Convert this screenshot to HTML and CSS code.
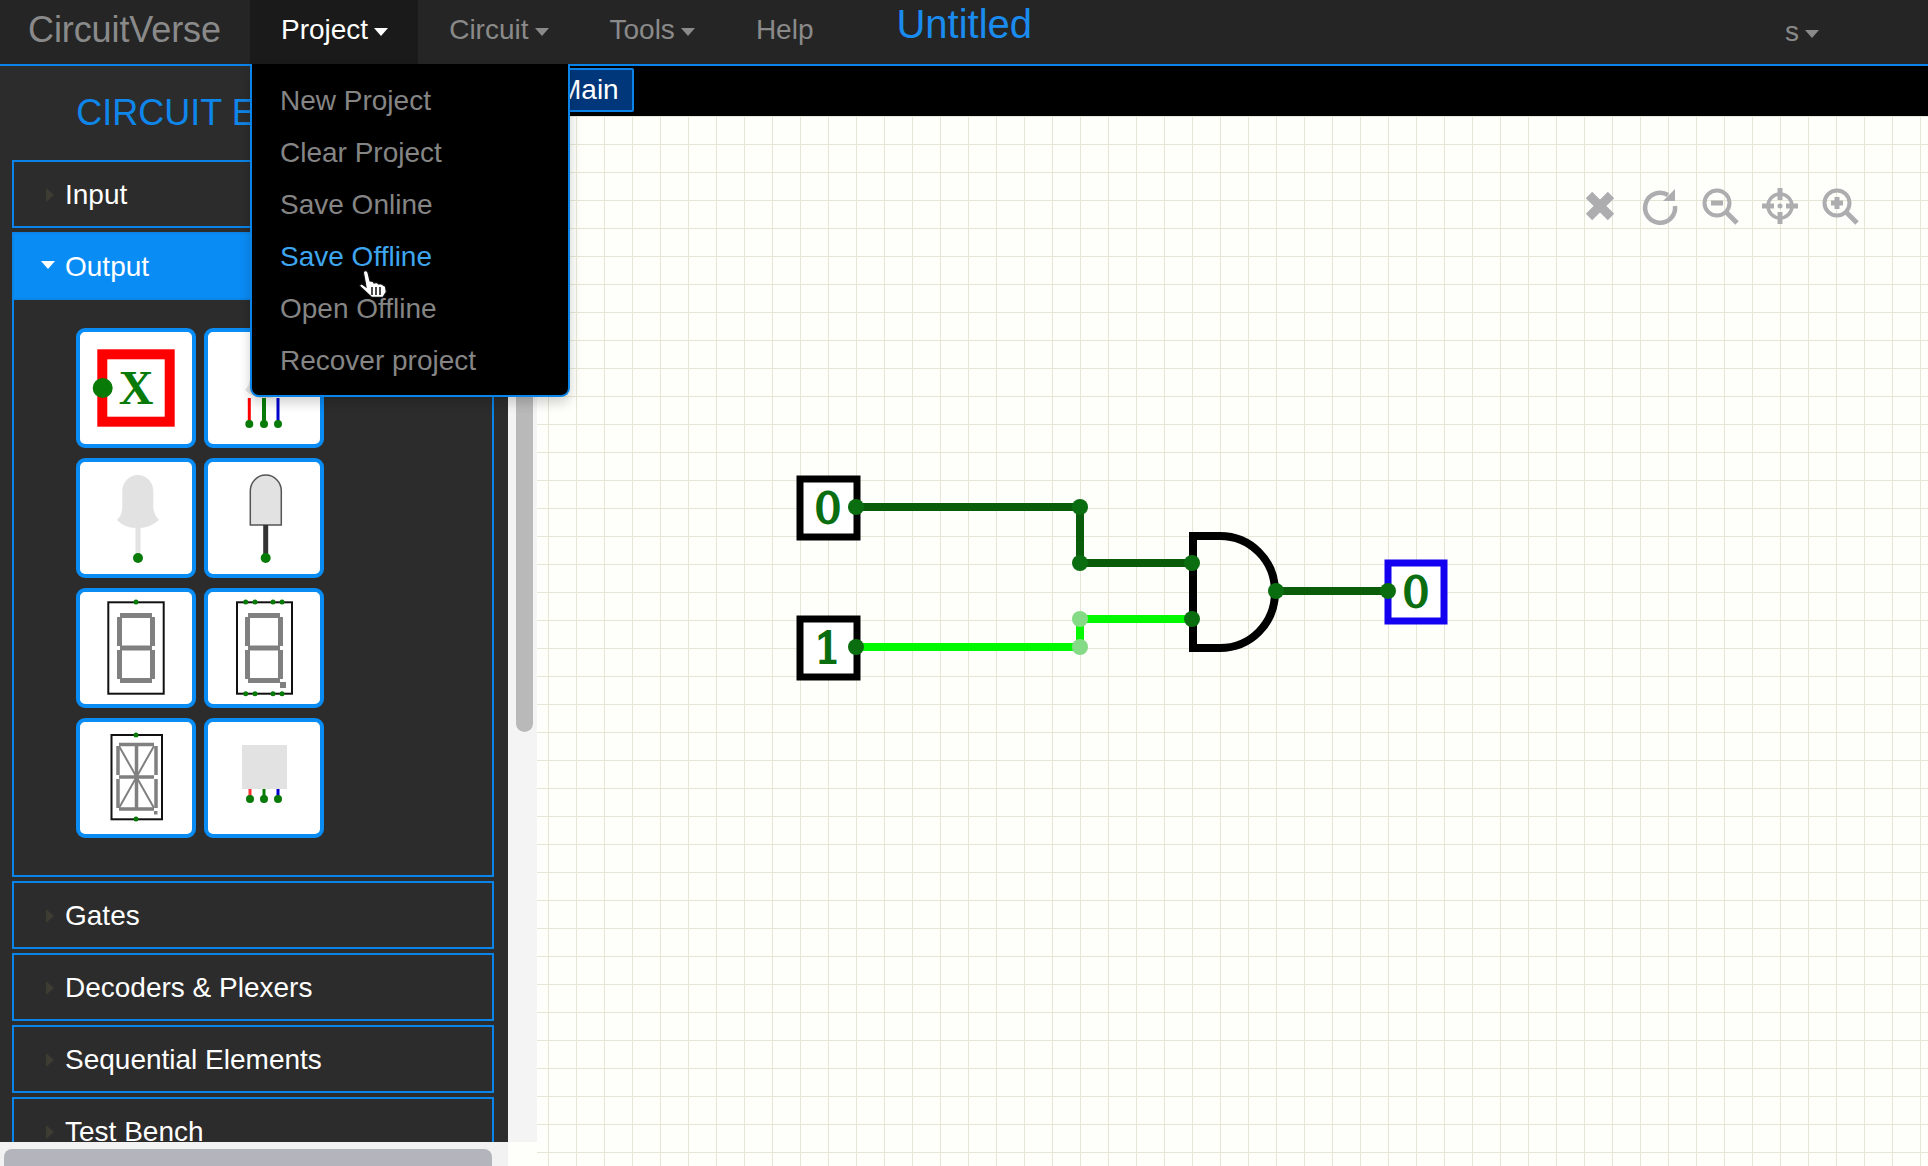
FILE: index.html
```html
<!DOCTYPE html>
<html lang="en">
<head>
<meta charset="utf-8">
<title>CircuitVerse</title>
<link rel="stylesheet" href="styles.css">
</head>
<body>
<nav class="navbar">
  <span class="brand">CircuitVerse</span>
  <div class="nav-item active">Project<i class="caret"></i>
    <div class="menu">
      <div class="menu-item">New Project</div>
      <div class="menu-item">Clear Project</div>
      <div class="menu-item">Save Online</div>
      <div class="menu-item hover">Save Offline</div>
      <div class="menu-item">Open Offline</div>
      <div class="menu-item">Recover project</div>
      <svg class="hand" viewBox="0 0 28 28">
        <path d="M6 .7C7.500.2 8.500 1 9 2.500L11 11L14 11.500L15 13L18 12.500L19.500 14L22.500 14L26.500 16.500L27.300 22L24 27.300H12.500L1 16.500C.3 15 1.700 13.500 3.300 14.300L7 17L4.500 3C4.300 2 5 1 6 .7Z" fill="#fff" stroke="#111" stroke-width="1.200"/>
        <path d="M13 17V25M17 17V25M21 17V25" stroke="#111" stroke-width="1.500" fill="none"/>
      </svg>
    </div>
  </div>
  <div class="nav-item">Circuit<i class="caret"></i></div>
  <div class="nav-item">Tools<i class="caret"></i></div>
  <div class="nav-item">Help</div>
  <span class="project-name">Untitled</span>
  <div class="user">s<i class="caret"></i></div>
</nav>

<main class="workspace">
  <div class="left-col">
    <div class="left-top">
      <aside class="sidebar">
        <h2 class="side-title">CIRCUIT ELEMENTS</h2>
        <div class="acc-row"><i class="arrow"></i>Input</div>
        <div class="acc-row open"><i class="arrow-down"></i>Output</div>
        <div class="panel">
          <div class="tile"><svg viewBox="4 4 112 112"><rect x="26.300" y="26.300" width="67.400" height="67.400" fill="#fff" stroke="#f00" stroke-width="10"/><circle cx="26.700" cy="60" r="10" fill="#087a08"/><text x="60" y="76" class="x-label">X</text></svg></div>
          <div class="tile"><svg viewBox="4 4 112 112"><path d="M46 33a15.500 16 0 0 1 31 0V50Q78 57 83 62Q72 71 62 70Q50 71 41 62Q46 57 46 50Z" fill="#e2e2e2"/><path d="M45.300 70V94" stroke="#f00" stroke-width="3"/><path d="M60 70V94" stroke="#087a08" stroke-width="4"/><path d="M74 70V94" stroke="#00c" stroke-width="3"/><g fill="#087a08"><circle cx="45.300" cy="96" r="4"/><circle cx="60" cy="96" r="4"/><circle cx="74" cy="96" r="4"/></g></svg></div>
          <div class="tile"><svg viewBox="4 4 112 112"><path d="M46.300 33a15.500 16 0 0 1 31 0V50Q78 57 83 62Q72 71 62 70Q50 71 41 62Q46 57 46.300 50Z" fill="#e2e2e2"/><path d="M62 70V96" stroke="#e2e2e2" stroke-width="5"/><circle cx="62" cy="100" r="5" fill="#087a08"/></svg></div>
          <div class="tile"><svg viewBox="4 4 112 112"><path d="M46.300 67V33a15.500 16 0 0 1 31 0V67Z" fill="#e2e2e2" stroke="#555" stroke-width="1.500"/><path d="M61.700 67V96" stroke="#333" stroke-width="5"/><circle cx="61.700" cy="100" r="5" fill="#087a08"/></svg></div>
          <div class="tile"><svg viewBox="4 4 112 112"><rect x="32.300" y="14.300" width="55.400" height="91.400" fill="#fff" stroke="#111" stroke-width="2"/><path d="M44 27.500H76M44 60H76M44 92.500H76M43.500 29V58M76.500 29V58M43.500 62V91M76.500 62V91" stroke="#808080" stroke-width="5" fill="none"/><circle cx="60" cy="14" r="2.500" fill="#087a08"/></svg></div>
          <div class="tile"><svg viewBox="4 4 112 112"><rect x="33" y="14.300" width="55" height="91.400" fill="#fff" stroke="#111" stroke-width="2"/><path d="M44 27.500H76M44 60H76M44 92.500H76M43.500 29V58M76.500 29V58M43.500 62V91M76.500 62V91" stroke="#808080" stroke-width="5" fill="none"/><rect x="76" y="94" width="6" height="6" fill="#808080"/><g fill="#087a08"><circle cx="41.700" cy="14" r="2.500"/><circle cx="51" cy="14" r="2.500"/><circle cx="69" cy="14" r="2.500"/><circle cx="78" cy="14" r="2.500"/><circle cx="41.700" cy="105.700" r="2.500"/><circle cx="51" cy="105.700" r="2.500"/><circle cx="69" cy="105.700" r="2.500"/><circle cx="78" cy="105.700" r="2.500"/></g></svg></div>
          <div class="tile"><svg viewBox="4 4 112 112"><rect x="35.500" y="17" width="50.500" height="84.300" fill="#fff" stroke="#111" stroke-width="2"/><path d="M43 26.500H78M43 59H78M43 91H78M42 28V57M80 28V57M42 61V90M80 61V90M60.500 27V91" stroke="#808080" stroke-width="3.500" fill="none"/><path d="M43 28L60.500 59L78 28M43 90L60.500 59L78 90" stroke="#808080" stroke-width="2" fill="none"/><rect x="78" y="93" width="3.500" height="3.500" fill="#808080"/><circle cx="60" cy="17" r="2.500" fill="#087a08"/><circle cx="60" cy="101" r="2.500" fill="#087a08"/></svg></div>
          <div class="tile"><svg viewBox="4 4 112 112"><rect x="38" y="27" width="45" height="44" fill="#e2e2e2"/><path d="M46 71V80" stroke="#f33" stroke-width="3"/><path d="M60 71V80" stroke="#087a08" stroke-width="3"/><path d="M74 71V80" stroke="#00c" stroke-width="3"/><g fill="#087a08"><circle cx="46" cy="81" r="4"/><circle cx="60" cy="81" r="4"/><circle cx="74" cy="81" r="4"/></g></svg></div>
        </div>
        <div class="acc-row"><i class="arrow"></i>Gates</div>
        <div class="acc-row"><i class="arrow"></i>Decoders &amp; Plexers</div>
        <div class="acc-row"><i class="arrow"></i>Sequential Elements</div>
        <div class="acc-row"><i class="arrow"></i>Test Bench</div>
      </aside>
      <div class="vtrack"><div class="vthumb"></div></div>
    </div>
    <div class="htrack"><div class="hthumb"></div></div>
  </div>

  <section class="stage">
    <div class="tabbar"><div class="tab">Main</div></div>
    <div class="canvas">
      <svg class="circuit" viewBox="537 116 1391 1050" width="1391" height="1050">
        <rect x="800" y="479" width="57" height="58" fill="#fff" stroke="#000" stroke-width="7"/>
        <rect x="800" y="619" width="57" height="58" fill="#fff" stroke="#000" stroke-width="7"/>
        <rect x="1388" y="563" width="56" height="58" fill="#fff" stroke="#1400f0" stroke-width="7"/>
        <text x="828" y="523" class="digit">0</text>
        <text x="828" y="663" class="digit">1</text>
        <text x="1416" y="607" class="digit">0</text>
        <path d="M1220 536H1193V648H1220C1250 648 1275 624 1275 592C1275 560 1250 536 1220 536Z" fill="none" stroke="#000" stroke-width="8"/>
        <path d="M856 507H1080V563H1192M1276 591H1387" fill="none" stroke="#0a5c0a" stroke-width="8"/>
        <path d="M856 647H1080V619H1192" fill="none" stroke="#00f800" stroke-width="8"/>
        <g fill="#0a6e10">
          <circle cx="856" cy="507" r="8"/><circle cx="1080" cy="507" r="8"/><circle cx="1080" cy="563" r="8"/><circle cx="1192" cy="563" r="8"/>
          <circle cx="856" cy="647" r="8"/><circle cx="1192" cy="619" r="8"/><circle cx="1276" cy="591" r="8"/><circle cx="1388" cy="591" r="8"/>
        </g>
        <circle cx="1080" cy="619" r="8" fill="#85da85"/><circle cx="1080" cy="647" r="8" fill="#85da85"/>
      </svg>
      <div class="tools">
        <svg viewBox="0 0 40 40"><path d="M9 9L31 31M31 9L9 31" stroke-width="9"/></svg>
        <svg viewBox="0 0 40 40"><path d="M28 9A15 15 0 1 0 35 20" stroke-width="4.500"/><path class="solid" d="M35 3V15H23Z"/></svg>
        <svg viewBox="0 0 40 40"><circle cx="17" cy="17" r="12.500" stroke-width="4"/><path d="M26 26L37 37" stroke-width="5"/><path d="M11 17H23" stroke-width="5"/></svg>
        <svg viewBox="0 0 40 40"><circle cx="20" cy="20" r="12" stroke-width="3.500"/><path d="M20 2V14M20 26V38M2 20H14M26 20H38" stroke-width="5"/><circle class="solid" cx="20" cy="20" r="2.500"/></svg>
        <svg viewBox="0 0 40 40"><circle cx="17" cy="17" r="12.500" stroke-width="4"/><path d="M26 26L37 37" stroke-width="5"/><path d="M11 17H23M17 11V23" stroke-width="5"/></svg>
      </div>
    </div>
  </section>
</main>
</body>
</html>
```
FILE: styles.css
```css
* { box-sizing: border-box; }
html, body { margin: 0; height: 100%; overflow: hidden; }
body {
  font-family: "Liberation Sans", Arial, sans-serif;
  font-size: 28px;
  background: #fefefb;
  color: #fff;
}

/* top bar */
.navbar {
  position: relative;
  z-index: 5;
  display: flex;
  align-items: stretch;
  height: 66px;
  background: #252525;
  border-bottom: 2px solid #0a84e8;
  color: #8a8a8a;
}
.brand {
  display: flex;
  align-items: center;
  width: 250px;
  padding: 0 0 5px 28px;
  font-size: 36px;
  letter-spacing: -0.1px;
}
.nav-item {
  position: relative;
  display: flex;
  align-items: center;
  padding: 0 30px 4px 31px;
}
.nav-item.active { background: #1a1a1a; color: #fff; }
.caret {
  display: inline-block;
  width: 0;
  height: 0;
  margin-left: 6px;
  margin-top: 3px;
  border-left: 7.500px solid transparent;
  border-right: 7.500px solid transparent;
  border-top: 8px solid currentColor;
}
.project-name {
  display: flex;
  align-items: center;
  margin-left: 53px;
  padding-bottom: 16px;
  font-size: 40px;
  color: #1a8cf0;
}
.user {
  display: flex;
  align-items: center;
  margin-left: auto;
  padding: 0 109px 0 0;
  font-size: 28px;
}

/* dropdown */
.menu {
  position: absolute;
  top: 64px;
  left: 0;
  width: 320px;
  height: 333px;
  padding: 11px 0;
  background: #000;
  border: 2px solid #0a84e8;
  border-top: 0;
  border-radius: 0 0 9px 9px;
  box-shadow: 0 6px 12px rgba(0, 0, 0, 0.18);
}
.menu-item {
  display: flex;
  align-items: center;
  height: 52px;
  padding-left: 28px;
  color: #858585;
}
.menu-item.hover { color: #3ea6f0; }
.hand {
  position: absolute;
  left: 107px;
  top: 206px;
  width: 28px;
  height: 28px;
}

/* layout */
.workspace { display: flex; height: 1100px; }
.left-col { display: flex; flex-direction: column; width: 537px; flex: none; }
.left-top { display: flex; height: 1076px; }
.sidebar {
  width: 508px;
  height: 100%;
  overflow: hidden;
  padding: 0 14px 0 12px;
  background: #2c2c2c;
}
.side-title {
  display: flex;
  align-items: center;
  justify-content: center;
  height: 94px;
  margin: 0;
  padding-right: 4px;
  font-size: 36px;
  font-weight: 400;
  white-space: nowrap;
  color: #0f86ea;
}
.acc-row {
  display: flex;
  align-items: center;
  height: 68px;
  margin-bottom: 4px;
  border: 2px solid #0a84e8;
  padding-left: 32px;
  padding-top: 1px;
}
.acc-row.open {
  margin-bottom: 0;
  background: #0a8cf5;
  padding-left: 27px;
}
.arrow {
  width: 0;
  height: 0;
  margin-right: 11px;
  border-top: 7px solid transparent;
  border-bottom: 7px solid transparent;
  border-left: 8px solid #3d3d33;
}
.arrow-down {
  width: 0;
  height: 0;
  margin-right: 10px;
  margin-top: -3px;
  border-left: 7.500px solid transparent;
  border-right: 7.500px solid transparent;
  border-top: 8px solid #fff;
}
.panel {
  display: grid;
  grid-template-columns: 120px 120px;
  grid-auto-rows: 120px;
  column-gap: 8px;
  row-gap: 10px;
  height: 577px;
  margin-bottom: 4px;
  padding: 28px 0 0 62px;
  border: 2px solid #0a84e8;
  border-top: 0;
}
.tile {
  background: #fff;
  border: 4px solid #0a8cf5;
  border-radius: 9px;
}
.tile svg { display: block; width: 112px; height: 112px; }
.x-label {
  font-family: "Liberation Serif", serif;
  font-size: 48px;
  font-weight: 700;
  text-anchor: middle;
  fill: #087a08;
}

/* scrollbars */
.vtrack { width: 29px; background: #f4f4f4; padding: 6px 0 0 8px; }
.vthumb { width: 17px; height: 660px; border-radius: 9px; background: #b9b9b9; }
.htrack { height: 24px; width: 508px; background: #f2f2f2; padding: 7px 16px 0 4px; }
.hthumb { height: 17px; border-radius: 8px 8px 0 0; background: #b4b4bc; }

/* stage */
.stage { flex: 1; display: flex; flex-direction: column; min-width: 0; }
.tabbar {
  display: flex;
  height: 50px;
  flex: none;
  padding: 2px 0 4px 3px;
  background: #000;
}
.tab {
  display: flex;
  align-items: center;
  width: 94px;
  padding-left: 16px;
  background: #00377a;
  border: 2px solid #0a84e8;
  border-radius: 2px;
}
.canvas {
  position: relative;
  flex: 1;
  background-color: #fefefb;
  background-image:
    linear-gradient(to right, #e7e6d6 1px, transparent 1px),
    linear-gradient(to bottom, #e7e6d6 1px, transparent 1px);
  background-size: 28px 28px;
  background-position: 11px 0;
}
.circuit { position: absolute; left: 0; top: 0; }
.digit {
  font-family: "DejaVu Serif", serif;
  font-size: 43px;
  font-weight: 400;
  text-anchor: middle;
  fill: #0a6e10;
  stroke: #0a6e10;
  stroke-width: 1.800px;
}
.tools {
  position: absolute;
  top: 70px;
  right: 68px;
  display: flex;
  gap: 20px;
}
.tools svg {
  width: 40px;
  height: 40px;
  fill: none;
  stroke: #adadb0;
}
.tools .solid { fill: #adadb0; stroke: none; }
```
